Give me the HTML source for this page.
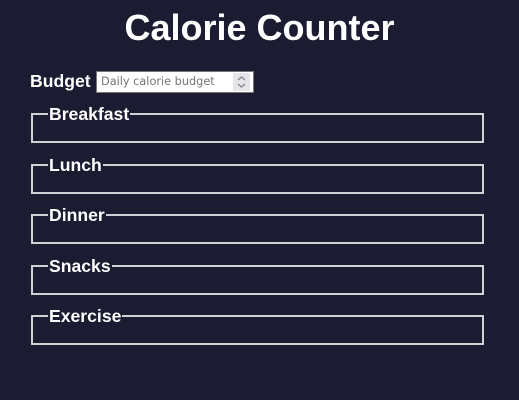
<!DOCTYPE html>
<html><head><style>
html,body{margin:0;padding:0;width:519px;height:400px;background:#1b1b32;overflow:hidden;font-family:"Liberation Sans",Arial,sans-serif;color:#fff}
h1{position:absolute;left:0;width:519px;top:8px;margin:0;text-align:center;font-size:36px;font-weight:bold;line-height:40px}
.lbl{position:absolute;left:30px;top:71px;font-size:17.6px;font-weight:bold;line-height:20px}
.inp{position:absolute;left:96px;top:71px;width:156px;height:20px;background:#fff;border:1px solid #767676;box-sizing:content-box}
.inp span{position:absolute;left:4px;top:3px;font-family:"DejaVu Sans",sans-serif;font-size:11.3px;color:#757575;line-height:14px}
.spin{position:absolute;left:136px;top:1px;width:17px;height:18px;background:#e6e6ea}
.fs{position:absolute;left:31px;width:449px;height:26px;border:2px solid #d0d0d5}
.fs b{position:absolute;left:15px;top:-11px;background:#1b1b32;padding:0 1px;font-size:17.6px;line-height:20px}
</style></head><body>
<h1>Calorie Counter</h1>
<div class="lbl">Budget</div>
<div class="inp"><span>Daily calorie budget</span><div class="spin"><svg width="17" height="18" viewBox="0 0 17 18"><path d="M5 7 L8.5 4 L12 7 M5 11 L8.5 14 L12 11" fill="none" stroke="#888" stroke-width="1.3"/></svg></div></div>
<div class="fs" style="top:113px"><b>Breakfast</b></div>
<div class="fs" style="top:164px"><b>Lunch</b></div>
<div class="fs" style="top:214px"><b>Dinner</b></div>
<div class="fs" style="top:265px"><b>Snacks</b></div>
<div class="fs" style="top:315px"><b>Exercise</b></div>
</body></html>
